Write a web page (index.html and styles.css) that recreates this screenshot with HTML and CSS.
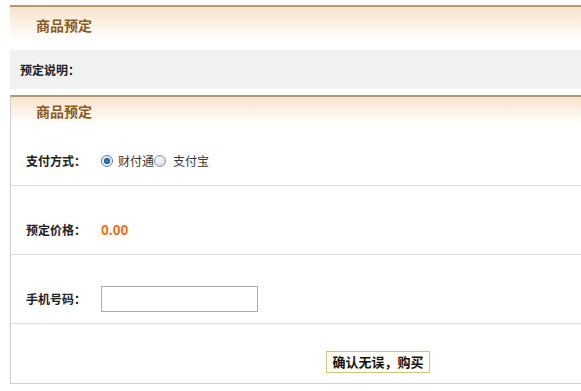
FILE: index.html
```html
<!DOCTYPE html>
<html lang="zh-CN">
<head>
<meta charset="utf-8">
<title>商品预定</title>
<link rel="stylesheet" href="styles.css">
</head>
<body>
<div class="page">
  <div class="head-bar">
    <h2 class="head-title">商品预定</h2>
  </div>
  <div class="desc-bar">预定说明：</div>
  <div class="panel">
    <div class="panel-head">
      <h2 class="head-title">商品预定</h2>
    </div>
    <div class="row row-first">
      <span class="label">支付方式：</span>
      <span class="value">
        <label class="opt"><input type="radio" name="pay" class="radio" checked><span class="opt-text">财付通</span></label><label class="opt"><input type="radio" name="pay" class="radio"><span class="opt-text">支付宝</span></label>
      </span>
    </div>
    <div class="row">
      <span class="label">预定价格：</span>
      <span class="value price">0.00</span>
    </div>
    <div class="row">
      <span class="label">手机号码：</span>
      <span class="value"><input type="text" class="phone"></span>
    </div>
    <div class="row row-last">
      <button type="button" class="buy-btn">确认无误，购买</button>
    </div>
  </div>
</div>
</body>
</html>
```

FILE: styles.css
```css
html, body {
  margin: 0;
  padding: 0;
  background: #fff;
}
body {
  font-family: "Noto Sans CJK SC", "Liberation Sans", sans-serif;
  font-size: 12px;
  color: #333;
}
.page {
  padding-top: 5px;
  margin-left: 10px;
}
.head-bar {
  height: 38px;
  border-top: 2px solid #b09878;
  background: linear-gradient(#f6e3cb, #fcf5ec 55%, #ffffff 85%);
}
.head-title {
  margin: 0;
  padding-left: 26px;
  font-size: 14px;
  font-weight: bold;
  color: #8b5a24;
  line-height: 36px;
}
.desc-bar {
  margin-top: 5px;
  height: 39px;
  line-height: 40px;
  background: #f1f1f1;
  padding-left: 10px;
  font-weight: bold;
  color: #222;
}
.panel {
  margin-top: 6px;
  border-top: 2px solid #b09878;
  border-left: 1px solid #cfcfcf;
  border-bottom: 1px solid #cfcfcf;
}
.panel-head {
  height: 28px;
  background: linear-gradient(#f6e3cb, #fcf5ec 60%, #ffffff 100%);
}
.panel-head .head-title {
  line-height: 28px;
  padding-left: 25px;
}
.row {
  display: flex;
  align-items: flex-end;
  height: 57px;
  padding-bottom: 11px;
  padding-left: 15px;
  border-bottom: 1px solid #dcdcdc;
}
.row-first {
  height: 49px;
}
.row-last {
  height: 49px;
  padding-bottom: 10px;
  border-bottom: 0;
  padding-left: 315px;
}
.label {
  width: 75px;
  line-height: 26px;
  font-weight: bold;
  color: #222;
}
.value {
  display: flex;
  align-items: center;
  height: 26px;
  line-height: 26px;
}
.opt {
  display: flex;
  align-items: center;
}
.radio {
  appearance: none;
  -webkit-appearance: none;
  margin: 0;
  width: 12px;
  height: 12px;
  border-radius: 50%;
  border: 1px solid #8f9aa5;
  background: radial-gradient(circle at 40% 35%, #ffffff, #dcdcdc 70%);
  box-sizing: border-box;
}
.radio:checked {
  border-color: #5d7c99;
  background: radial-gradient(circle at 50% 50%, #3b87c8 0, #1b5f9c 2.8px, #dfe6ec 3.4px, #f5f5f5 5px);
}
.opt-text {
  margin-left: 5px;
  color: #333;
}
.opt + .opt .opt-text {
  margin-left: 7px;
}
.price {
  font-family: "Liberation Sans", Arial, sans-serif;
  font-size: 14px;
  font-weight: bold;
  color: #f26c12;
}
.phone {
  width: 157px;
  height: 26px;
  box-sizing: border-box;
  margin: 0;
  border: 1px solid #ababab;
  padding: 2px 4px;
  font-size: 12px;
}
.buy-btn {
  width: 104px;
  height: 22px;
  padding: 0;
  border: 1px solid #d6c184;
  background: #fffdf6;
  font-family: "Noto Sans CJK SC", sans-serif;
  font-size: 13px;
  font-weight: bold;
  color: #111;
  line-height: 20px;
}
```
